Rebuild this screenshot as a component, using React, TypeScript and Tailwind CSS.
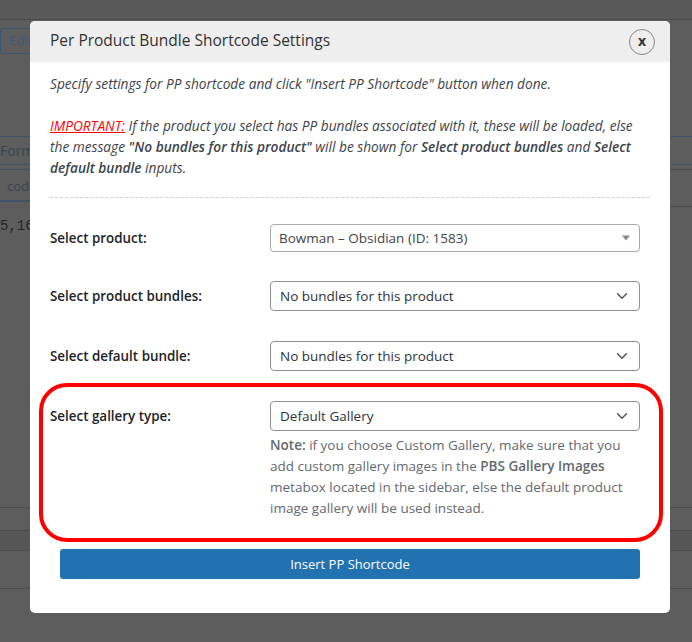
import React from "react";
import { ChevronDown } from "lucide-react";

const font = { fontFamily: '"Open Sans", "Noto Sans", Arial, sans-serif' };

function Chevron() {
  return <ChevronDown className="w-[18px] h-[18px] text-[#50575e]" strokeWidth={2} />;
}

function SelectBox({ text }: { text: string }) {
  return (
    <div className="h-[30px] w-[370px] border border-[#8c8f94] rounded-[4px] bg-white flex items-center justify-between pl-[9px] pr-[8px] text-[13.5px] text-[#2c3338]">
      <span>{text}</span>
      <Chevron />
    </div>
  );
}

function Select2({ text }: { text: string }) {
  return (
    <div className="h-[28px] w-[370px] border border-[#aaaaaa] rounded-[4px] bg-white flex items-center justify-between pl-[8px] pr-[8px] text-[13.5px] text-[#444]">
      <span>{text}</span>
      <svg width="10" height="6" viewBox="0 0 10 6">
        <path d="M1 0.5 L9 0.5 L5 5.5 Z" fill="#888" />
      </svg>
    </div>
  );
}

export default function App() {
  return (
    <div className="relative w-[692px] h-[642px] bg-[#5d5d5d] overflow-hidden" style={font}>
      {/* background admin page (dimmed) */}
      <div className="flex flex-col">
        <div className="h-[20px] bg-[#595959] border-b border-[#4c4c4c]" />
        <div className="h-[8px]" />
        <div className="flex">
          <div className="h-[26px] w-[40px] border border-[#3c5570] rounded-[3px] text-[13px] text-[#3f5a75] pl-[8px] flex items-center">
            Edit
          </div>
        </div>
        <div className="h-[82px]" />
        <div className="border-t border-[#3f5368] h-[28px] flex items-center text-[#3a444e] text-[14px]">
          Form
        </div>
        <div className="border-t border-[#3f5368] h-[5px]" />
        <div className="border-t border-[#3f5368] flex">
          <div className="h-[32px] pl-[7px] pt-[7px] text-[13px] text-[#3a444e] border-b-2 border-[#3f5368] w-[60px]">
            code
          </div>
        </div>
        <div className="pt-[14px] text-[14px] text-[#262626]" style={{ fontFamily: '"Liberation Mono", monospace' }}>
          5,167
        </div>
      </div>
      {/* right side stripes */}
      <div className="absolute left-[670px] top-[169px] w-[30px] h-[38px] border-t border-b border-[#4c4c4c]" />
      <div className="absolute left-0 top-[507px] w-[692px] h-[24px] border-t border-b border-[#4c4c4c]" />
      <div className="absolute left-0 top-[531px] w-[692px] h-[20px] bg-[#565656] border-b border-[#4c4c4c]" />
      <div className="absolute left-0 top-[588px] w-[692px] border-t border-[#4c4c4c]" />

      {/* modal */}
      <div className="absolute left-[30px] top-[21px] w-[640px] h-[592px] bg-white rounded-[5px] overflow-hidden flex flex-col">
        <div className="h-[40px] bg-[#eeeeee] flex items-center justify-between pl-[20px] pr-[15px] shadow-[0_1px_2px_rgba(0,0,0,0.06)]">
          <div className="text-[15.5px] text-[#333] font-medium">Per Product Bundle Shortcode Settings</div>
          <div className="w-[26px] h-[26px] mt-[2px] rounded-full border border-[#888] flex items-center justify-center text-[14px] font-bold text-[#333] leading-none pb-[2px]">
            x
          </div>
        </div>
        <div className="px-[20px] pt-[12px] text-[13.7px] leading-[21px] text-[#3c434a]">
          <p className="italic">Specify settings for PP shortcode and click "Insert PP Shortcode" button when done.</p>
          <p className="italic mt-[21px]">
            <span className="text-[#ff0000] underline">IMPORTANT:</span> If the product you select has PP bundles associated with it, these will be loaded, else
            <br />
            the message <b className="font-semibold">"No bundles for this product"</b> will be shown for <b className="font-semibold">Select product bundles</b> and <b className="font-semibold">Select</b>
            <br />
            <b className="font-semibold">default bundle</b> inputs.
          </p>
          <div className="mt-[19px] border-t border-dashed border-[#d0d0d0]" />
          <div className="mt-[26px] grid grid-cols-[220px_370px] items-center text-[#1d2327] text-[13.4px]">
            <div className="font-semibold">Select product:</div>
            <Select2 text="Bowman – Obsidian (ID: 1583)" />
          </div>
          <div className="mt-[29px] grid grid-cols-[220px_370px] items-center text-[#1d2327] text-[13.4px]">
            <div className="font-semibold">Select product bundles:</div>
            <SelectBox text="No bundles for this product" />
          </div>
          <div className="mt-[30px] grid grid-cols-[220px_370px] items-center text-[#1d2327] text-[13.4px]">
            <div className="font-semibold">Select default bundle:</div>
            <SelectBox text="No bundles for this product" />
          </div>
          <div className="mt-[30px] grid grid-cols-[220px_370px] text-[#1d2327] text-[13.4px]">
            <div className="font-semibold h-[30px] flex items-center">Select gallery type:</div>
            <div className="flex flex-col">
              <SelectBox text="Default Gallery" />
              <p className="mt-[4px] text-[#646970] pr-[10px] text-[13.5px]">
                <b className="font-semibold">Note:</b> if you choose Custom Gallery, make sure that you add custom gallery images in the <b className="font-semibold">PBS Gallery Images</b> metabox located in the sidebar, else the default product image gallery will be used instead.
              </p>
            </div>
          </div>
          <div className="mt-[30px] ml-[10px] w-[580px] h-[30px] bg-[#2271b1] rounded-[3px] text-white text-[13px] flex items-center justify-center">
            Insert PP Shortcode
          </div>
        </div>
      </div>

      {/* red annotation */}
      <div className="absolute left-[39px] top-[383px] w-[624px] h-[159px] border-[4px] border-[#ff0000] rounded-[28px]" />
    </div>
  );
}
